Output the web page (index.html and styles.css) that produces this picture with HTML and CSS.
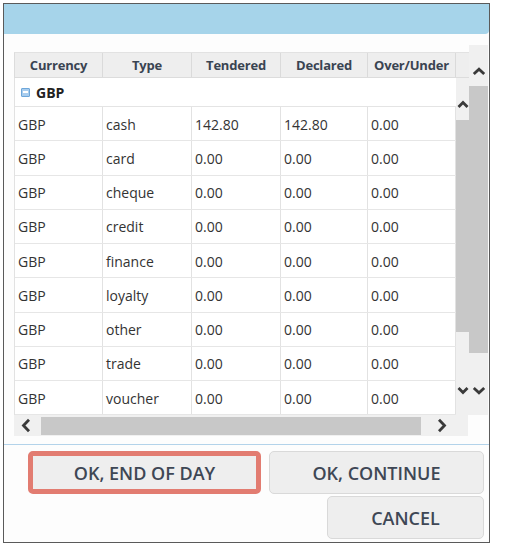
FILE: index.html
```html
<!DOCTYPE html>
<html>
<head>
<meta charset="utf-8">
<link rel="stylesheet" href="styles.css">
</head>
<body>
<div class="dialog">
  <div class="titlebar"></div>
  <div class="content">
    <div class="grid">
      <div class="grid-head">
        <div class="hcell">Currency</div>
        <div class="hcell">Type</div>
        <div class="hcell">Tendered</div>
        <div class="hcell">Declared</div>
        <div class="hcell">Over/Under</div>
        <div class="hcell filler"></div>
      </div>
      <div class="grid-body">
        <div class="rows">
          <div class="group-row"><span class="collapse-icon"></span>GBP</div>
          <div class="row"><div class="cell">GBP</div><div class="cell">cash</div><div class="cell">142.80</div><div class="cell">142.80</div><div class="cell">0.00</div></div>
          <div class="row"><div class="cell">GBP</div><div class="cell">card</div><div class="cell">0.00</div><div class="cell">0.00</div><div class="cell">0.00</div></div>
          <div class="row"><div class="cell">GBP</div><div class="cell">cheque</div><div class="cell">0.00</div><div class="cell">0.00</div><div class="cell">0.00</div></div>
          <div class="row"><div class="cell">GBP</div><div class="cell">credit</div><div class="cell">0.00</div><div class="cell">0.00</div><div class="cell">0.00</div></div>
          <div class="row"><div class="cell">GBP</div><div class="cell">finance</div><div class="cell">0.00</div><div class="cell">0.00</div><div class="cell">0.00</div></div>
          <div class="row"><div class="cell">GBP</div><div class="cell">loyalty</div><div class="cell">0.00</div><div class="cell">0.00</div><div class="cell">0.00</div></div>
          <div class="row"><div class="cell">GBP</div><div class="cell">other</div><div class="cell">0.00</div><div class="cell">0.00</div><div class="cell">0.00</div></div>
          <div class="row"><div class="cell">GBP</div><div class="cell">trade</div><div class="cell">0.00</div><div class="cell">0.00</div><div class="cell">0.00</div></div>
          <div class="row"><div class="cell">GBP</div><div class="cell">voucher</div><div class="cell">0.00</div><div class="cell">0.00</div><div class="cell">0.00</div></div>
        </div>
        <div class="vscroll inner">
          <span class="arrow"><svg width="12" height="9" viewBox="0 0 12 9"><polyline points="1.5,7 6,2.5 10.5,7" fill="none" stroke="#3a3a3a" stroke-width="2.8"/></svg></span>
          <div class="thumb inner-thumb"></div>
          <span class="arrow down"><svg width="12" height="9" viewBox="0 0 12 9"><polyline points="1.5,2 6,6.5 10.5,2" fill="none" stroke="#3a3a3a" stroke-width="2.8"/></svg></span>
        </div>
      </div>
      <div class="hscroll">
        <span class="harrow left"><svg width="10" height="15" viewBox="0 0 10 15"><polyline points="8,1.8 2.5,7.5 8,13.2" fill="none" stroke="#3a3a3a" stroke-width="2.8"/></svg></span>
        <div class="hthumb"></div>
        <span class="harrow right"><svg width="10" height="15" viewBox="0 0 10 15"><polyline points="2,1.8 7.5,7.5 2,13.2" fill="none" stroke="#3a3a3a" stroke-width="2.8"/></svg></span>
      </div>
    </div>
    <div class="vscroll outer">
      <span class="arrow"><svg width="14" height="9" viewBox="0 0 14 9"><polyline points="1.8,7 7,2.2 12.2,7" fill="none" stroke="#3a3a3a" stroke-width="2.8"/></svg></span>
      <div class="thumb outer-thumb"></div>
      <span class="arrow down"><svg width="14" height="9" viewBox="0 0 14 9"><polyline points="1.8,2 7,6.8 12.2,2" fill="none" stroke="#3a3a3a" stroke-width="2.8"/></svg></span>
    </div>
  </div>
  <div class="actions">
    <button class="btn btn-primary">OK, END OF DAY</button>
    <button class="btn btn-continue">OK, CONTINUE</button>
    <button class="btn btn-cancel">CANCEL</button>
  </div>
</div>
</body>
</html>
```

FILE: styles.css
```css
body {
  margin: 0;
  background: #ffffff;
  font-family: "Open Sans", "Liberation Sans", sans-serif;
}

.dialog {
  margin: 3px 0 0 3px;
  width: 487px;
  height: 540px;
  box-sizing: border-box;
  border: 1px solid #5a5a5a;
  display: flex;
  flex-direction: column;
  background: #fdfdfd;
}

.titlebar {
  flex: none;
  height: 30px;
  background: #a6d4ea;
  border-radius: 0 0 4px 0;
}

.content {
  flex: none;
  height: 411px;
  box-sizing: border-box;
  border-bottom: 1px solid #b3d3ea;
  padding: 11px 1px 0 10px;
  display: flex;
  align-items: flex-start;
}

.grid {
  margin-top: 7px;
  width: 455px;
  display: flex;
  flex-direction: column;
}

.grid-head {
  display: grid;
  grid-template-columns: 88px 89px 89px 87px 88px 13px;
  height: 26px;
  box-sizing: border-box;
  border-left: 1px solid #dcdcdc;
  border-top: 1px solid #e2e2e2;
  border-bottom: 1px solid #dcdcdc;
  background: #eeeeee;
}

.hcell {
  border-right: 1px solid #dadada;
  display: flex;
  align-items: center;
  justify-content: center;
  font-size: 13px;
  font-weight: 700;
  letter-spacing: -0.2px;
  color: #3a4452;
}

.hcell.filler {
  border-right: none;
}

.grid-body {
  display: flex;
  height: 337px;
}

.rows {
  width: 442px;
  box-sizing: border-box;
  border-left: 1px solid #e2e2e2;
  background: #ffffff;
}

.group-row {
  height: 29px;
  box-sizing: border-box;
  border-bottom: 1px solid #e4e4e4;
  display: flex;
  align-items: center;
  padding-left: 6px;
  gap: 6px;
  font-size: 14px;
  font-weight: 700;
  color: #222222;
}

.collapse-icon {
  width: 9px;
  height: 9px;
  box-sizing: border-box;
  border: 1px solid #6ea7da;
  border-radius: 1px;
  background: #a9cdee;
  display: flex;
  align-items: center;
  justify-content: center;
}

.collapse-icon::after {
  content: "";
  width: 5px;
  height: 1.5px;
  background: #ffffff;
}

.row {
  display: grid;
  grid-template-columns: 88px 89px 89px 87px 88px;
  height: 34.25px;
  box-sizing: border-box;
  border-bottom: 1px solid #e6e6e6;
}

.cell {
  border-right: 1px solid #e2e2e2;
  padding-left: 3px;
  padding-top: 1px;
  display: flex;
  align-items: center;
  font-size: 14px;
  color: #333333;
}

.vscroll {
  flex: none;
  display: flex;
  flex-direction: column;
  align-items: center;
  background: #f0f0f0;
  box-sizing: border-box;
}

.vscroll.inner {
  width: 13px;
  height: 337px;
  padding: 18px 0 17px;
}

.vscroll.outer {
  width: 19px;
  height: 370px;
  padding: 18px 0 17px;
}

.arrow {
  height: 16px;
  display: flex;
  align-items: center;
  justify-content: center;
}

.arrow.down {
  margin-top: auto;
}

.thumb {
  align-self: stretch;
  background: #c8c8c8;
}

.inner-thumb {
  margin-top: 8px;
  height: 212px;
}

.outer-thumb {
  margin-top: 7px;
  height: 267px;
}

.hscroll {
  height: 21px;
  width: 454px;
  background: #f0f0f0;
  display: flex;
  align-items: center;
}

.harrow {
  display: flex;
  align-items: center;
  justify-content: center;
  height: 21px;
}

.harrow.left {
  width: 24px;
}

.harrow.right {
  width: 42px;
}

.hthumb {
  margin-left: 3px;
  width: 380px;
  height: 18px;
  background: #c8c8c8;
}

.actions {
  flex: 1;
  display: flex;
  flex-wrap: wrap;
  justify-content: flex-end;
  align-content: flex-start;
  column-gap: 8px;
  row-gap: 2px;
  padding: 6px 5px 0 24px;
}

.btn {
  height: 43px;
  box-sizing: border-box;
  border: 1px solid #d9d9d9;
  border-radius: 5px;
  background: #eeeeee;
  font-family: "Open Sans", "Liberation Sans", sans-serif;
  font-size: 18px;
  font-weight: 600;
  color: #3e4755;
  padding: 0;
}

.btn-primary {
  width: 233px;
  border: 5px solid #e27c71;
}

.btn-continue {
  width: 215px;
}

.btn-cancel {
  width: 157px;
}
```
